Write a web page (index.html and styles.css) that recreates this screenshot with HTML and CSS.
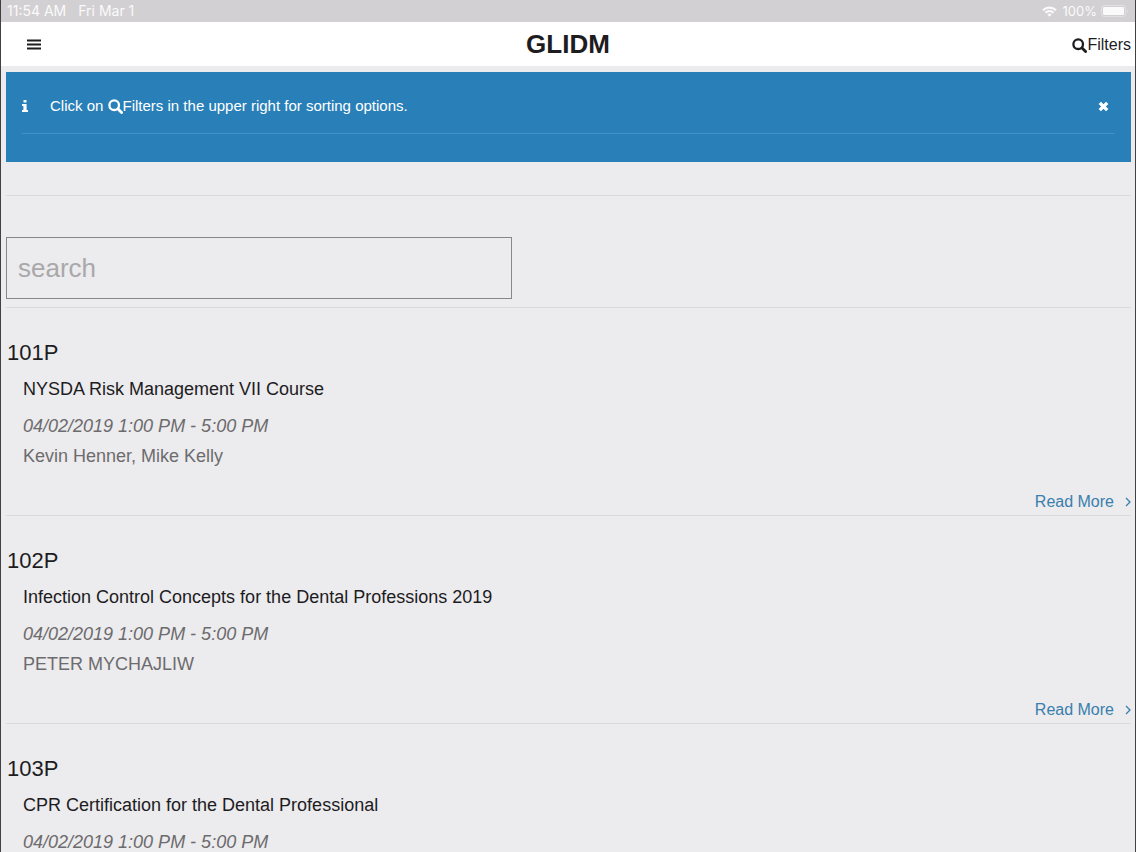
FILE: index.html
```html
<!DOCTYPE html>
<html lang="en">
<head>
<meta charset="utf-8">
<meta name="viewport" content="width=device-width, initial-scale=1">
<title>GLIDM</title>
<link rel="stylesheet" href="styles.css">
</head>
<body>
<svg class="symbols" aria-hidden="true">
  <symbol id="magnifier" viewBox="0 0 15 15"><circle cx="6.2" cy="6.2" r="4.8" fill="none" stroke="currentColor" stroke-width="2.3"/><path d="M10 10l3.6 3.6" fill="none" stroke="currentColor" stroke-width="2.8" stroke-linecap="round"/></symbol>
  <symbol id="chevron" viewBox="0 0 6 10"><path d="M1 1l4 4-4 4" fill="none" stroke="currentColor" stroke-width="1.3"/></symbol>
</svg>
<div class="status">
  <span class="status-time">11:54 AM</span>
  <span class="status-date">Fri Mar 1</span>
  <svg class="wifi" viewBox="0 0 15 11" aria-hidden="true"><path d="M1 4.2a9.400 9.400 0 0 1 13 0M3.400 6.700a6 6 0 0 1 8.200 0" fill="none" stroke="currentColor" stroke-width="2.200"/><path d="M5.300 8.500a3.400 3.400 0 0 1 4.400 0L7.500 10.800z" fill="currentColor"/></svg>
  <span class="status-charge">100%</span>
  <svg class="battery" viewBox="0 0 28 12" aria-hidden="true"><rect x=".5" y=".5" width="24" height="11" rx="2.500" fill="none" stroke="currentColor" opacity=".4"/><rect x="2" y="2" width="21" height="8" rx="1" fill="currentColor"/><path d="M26 4.200q1.500 1.800 0 3.600z" fill="currentColor" opacity=".6"/></svg>
</div>
<header class="topbar">
  <button class="menu" aria-label="Menu"><svg viewBox="0 0 14 12" aria-hidden="true"><path d="M0 2h14M0 6h14M0 10h14" transform="translate(0 .5)" stroke="currentColor" stroke-width="2.200"/></svg></button>
  <h1 class="brand">GLIDM</h1>
  <button class="filters"><svg class="magnifier" aria-hidden="true"><use href="#magnifier"/></svg>Filters</button>
</header>
<main class="content">
  <section class="notice">
    <div class="notice-row">
      <svg class="info" viewBox="0 0 6 12" aria-hidden="true"><path d="M1.500 0h3v2.600h-3zM0 4h4.600v6H6v2H0v-2h1.400V6H0z" fill="currentColor"/></svg>
      <p class="notice-text">Click on <svg class="magnifier" aria-hidden="true"><use href="#magnifier"/></svg>Filters in the upper right for sorting options.</p>
      <button class="close" aria-label="Close"><svg viewBox="0 0 11 11" aria-hidden="true"><path d="M1.800 1.800l7.400 7.400M9.200 1.800L1.800 9.200" stroke="currentColor" stroke-width="3.300"/></svg></button>
    </div>
  </section>
  <div class="search">
    <input class="search-box" type="text" placeholder="search" aria-label="search">
  </div>
  <ul class="courses">
    <li class="course">
      <h2 class="code">101P</h2>
      <h3 class="name">NYSDA Risk Management VII Course</h3>
      <p class="time">04/02/2019 1:00 PM - 5:00 PM</p>
      <p class="people">Kevin Henner, Mike Kelly</p>
      <a class="more" href="#101P">Read More<svg class="chevron" aria-hidden="true"><use href="#chevron"/></svg></a>
    </li>
    <li class="course">
      <h2 class="code">102P</h2>
      <h3 class="name">Infection Control Concepts for the Dental Professions 2019</h3>
      <p class="time">04/02/2019 1:00 PM - 5:00 PM</p>
      <p class="people">PETER MYCHAJLIW</p>
      <a class="more" href="#102P">Read More<svg class="chevron" aria-hidden="true"><use href="#chevron"/></svg></a>
    </li>
    <li class="course">
      <h2 class="code">103P</h2>
      <h3 class="name">CPR Certification for the Dental Professional</h3>
      <p class="time">04/02/2019 1:00 PM - 5:00 PM</p>
    </li>
  </ul>
</main>
</body>
</html>
```
FILE: styles.css
```css
* { box-sizing: border-box; }
html { height: 100%; }
body {
  height: 100%;
  margin: 0;
  overflow: hidden;
  background: #ecebed;
  border-left: 1px solid #414043;
  border-right: 1px solid #414043;
  color: #1d1c1f;
  font: 16px/20px "Liberation Sans", Arial, sans-serif;
}
h1, h2, h3, p, ul { margin: 0; padding: 0; font-weight: normal; }
button { border: 0; padding: 0; background: none; color: inherit; font: inherit; cursor: pointer; }
svg { display: block; }
.symbols { position: absolute; width: 0; height: 0; }
.status {
  display: flex;
  align-items: center;
  height: 22px;
  padding: 0 6px;
  background: #d2d0d2;
  color: #fafafa;
  font: 14px/22px Inter, sans-serif;
}
.status-date { margin: 0 auto 0 12px; }
.status-charge { font-size: 13px; }
.wifi { width: 15px; height: 11px; margin-right: 6px; }
.battery { width: 28px; height: 12px; margin-left: 4px; }
.topbar {
  display: grid;
  grid-template-columns: 1fr auto 1fr;
  align-items: center;
  height: 44px;
  padding: 0 4px 0 26px;
  background: #fff;
}
.menu { justify-self: start; }
.menu svg { width: 14px; height: 12px; }
.brand { padding-right: 22px; font-size: 26px; line-height: 32px; font-weight: bold; }
.filters { display: flex; align-items: center; justify-self: end; line-height: 22px; padding-top: 2px; }
.magnifier { width: 15px; height: 15px; }
.content { padding: 6px 4px 0 5px; }
.notice { height: 90px; padding: 24px 16px 0; background: #2980b9; color: #fff; }
.notice-row {
  display: flex;
  align-items: center;
  padding-bottom: 17px;
  border-bottom: 1px solid #3f91c7;
}
.info { width: 6px; height: 12px; }
.notice-text { flex: 1; margin-left: 22px; font-size: 15px; }
.notice-text .magnifier { display: inline-block; vertical-align: -3px; }
.close { margin-right: 6px; }
.close svg { width: 11px; height: 11px; }
.search { margin-top: 33px; padding: 41px 0 8px; border-top: 1px solid #dad9db; }
.search-box {
  display: block;
  width: 45%;
  height: 62px;
  padding: 0 11px;
  border: 1px solid #88878a;
  border-radius: 0;
  background: transparent;
  color: inherit;
  font: 26px/32px "Liberation Sans", Arial, sans-serif;
}
.search-box::placeholder { color: #a9a8ab; opacity: 1; }
.courses { list-style: none; border-top: 1px solid #dad9db; }
.course {
  display: flex;
  flex-direction: column;
  padding: 33px 0 3px 17px;
  border-bottom: 1px solid #dad9db;
}
.code { margin-left: -16px; font-size: 22px; line-height: 24px; }
.name { margin-top: 12px; font-size: 18px; line-height: 24px; }
.time { margin-top: 10px; color: #6c6b6e; font-size: 18px; line-height: 30px; font-style: italic; }
.people { color: #6c6b6e; font-size: 18px; line-height: 30px; }
.more {
  display: flex;
  align-items: center;
  align-self: flex-end;
  margin-top: 21px;
  color: #397fae;
  text-decoration: none;
}
.chevron { width: 6px; height: 10px; margin-left: 11px; }
```
